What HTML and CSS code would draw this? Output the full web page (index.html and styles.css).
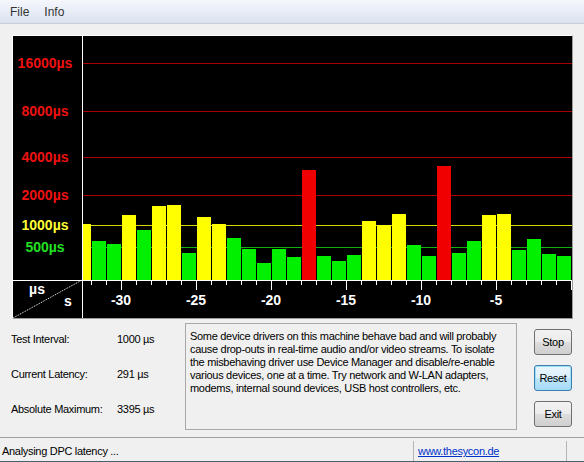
FILE: index.html
```html
<!DOCTYPE html>
<html lang="en">
<head>
  <meta charset="UTF-8">
  <title>DPC Latency Checker</title>
  <link rel="stylesheet" href="styles.css">
</head>
<body>
  <div class="menubar">
    <span>File</span>
    <span>Info</span>
  </div>

  <div class="chart-frame">
    <svg class="chart" width="559" height="282" viewBox="0 0 559 282">
      <!-- threshold lines -->
      <rect class="line-red" x="70" y="27" width="489" height="1"/>
      <rect class="line-red" x="70" y="75" width="489" height="1"/>
      <rect class="line-red" x="70" y="121" width="489" height="1"/>
      <rect class="line-red" x="70" y="159" width="489" height="1"/>
      <rect class="line-yellow" x="70" y="189" width="489" height="1"/>
      <rect class="line-green" x="70" y="211" width="489" height="1"/>

      <text class="lbl lbl-red" x="32" y="32">16000µs</text>
      <text class="lbl lbl-red" x="32" y="80">8000µs</text>
      <text class="lbl lbl-red" x="32" y="126">4000µs</text>
      <text class="lbl lbl-red" x="32" y="164">2000µs</text>
      <text class="lbl lbl-yellow" x="32" y="194">1000µs</text>
      <text class="lbl lbl-green" x="32" y="216">500µs</text>

      <!-- bars, one per second -->
      <rect class="bar-y" x="70" y="188" width="8" height="56"/>
      <rect class="bar-g" x="79" y="205" width="14" height="39"/>
      <rect class="bar-g" x="94" y="208" width="14" height="36"/>
      <rect class="bar-y" x="109" y="179" width="14" height="65"/>
      <rect class="bar-g" x="124" y="194" width="14" height="50"/>
      <rect class="bar-y" x="139" y="170" width="14" height="74"/>
      <rect class="bar-y" x="154" y="169" width="14" height="75"/>
      <rect class="bar-g" x="169" y="217" width="14" height="27"/>
      <rect class="bar-y" x="184" y="181" width="14" height="63"/>
      <rect class="bar-y" x="199" y="188" width="14" height="56"/>
      <rect class="bar-g" x="214" y="202" width="14" height="42"/>
      <rect class="bar-g" x="229" y="213" width="14" height="31"/>
      <rect class="bar-g" x="244" y="227" width="14" height="17"/>
      <rect class="bar-g" x="259" y="213" width="14" height="31"/>
      <rect class="bar-g" x="274" y="221" width="14" height="23"/>
      <rect class="bar-r" x="289" y="134" width="14" height="110"/>
      <rect class="bar-g" x="304" y="220" width="14" height="24"/>
      <rect class="bar-g" x="319" y="225" width="14" height="19"/>
      <rect class="bar-g" x="334" y="219" width="14" height="25"/>
      <rect class="bar-y" x="349" y="185" width="14" height="59"/>
      <rect class="bar-y" x="364" y="189" width="14" height="55"/>
      <rect class="bar-y" x="379" y="178" width="14" height="66"/>
      <rect class="bar-g" x="394" y="209" width="14" height="35"/>
      <rect class="bar-g" x="409" y="220" width="14" height="24"/>
      <rect class="bar-r" x="424" y="130" width="14" height="114"/>
      <rect class="bar-g" x="439" y="217" width="14" height="27"/>
      <rect class="bar-g" x="454" y="205" width="14" height="39"/>
      <rect class="bar-y" x="469" y="179" width="14" height="65"/>
      <rect class="bar-y" x="484" y="178" width="14" height="66"/>
      <rect class="bar-g" x="499" y="214" width="14" height="30"/>
      <rect class="bar-g" x="514" y="203" width="14" height="41"/>
      <rect class="bar-g" x="529" y="218" width="14" height="26"/>
      <rect class="bar-g" x="544" y="220" width="14" height="24"/>

      <!-- axes -->
      <rect class="axis" x="69" y="0" width="1" height="282"/>
      <rect class="axis" x="0" y="244" width="559" height="1"/>
      <line class="diag" x1="0" y1="282" x2="69" y2="244"/>
      <text class="lbl lbl-white" x="24" y="258" text-anchor="start">µs</text>
      <text class="lbl lbl-white" x="55" y="270" text-anchor="start">s</text>

      <path class="ticks" d="M78.5 245v4M93.5 245v4M108.5 245v9M123.5 245v4M138.5 245v4M153.5 245v4M168.5 245v4M183.5 245v9M198.5 245v4M213.5 245v4M228.5 245v4M243.5 245v4M258.5 245v9M273.5 245v4M288.5 245v4M303.5 245v4M318.5 245v4M333.5 245v9M348.5 245v4M363.5 245v4M378.5 245v4M393.5 245v4M408.5 245v9M423.5 245v4M438.5 245v4M453.5 245v4M468.5 245v4M483.5 245v9M498.5 245v4M513.5 245v4M528.5 245v4M543.5 245v4M558.5 245v9"/>

      <text class="lbl lbl-white" x="108" y="269">-30</text>
      <text class="lbl lbl-white" x="183" y="269">-25</text>
      <text class="lbl lbl-white" x="258" y="269">-20</text>
      <text class="lbl lbl-white" x="333" y="269">-15</text>
      <text class="lbl lbl-white" x="408" y="269">-10</text>
      <text class="lbl lbl-white" x="483" y="269">-5</text>
    </svg>
  </div>

  <div class="panel">
    <div class="stats">
      <div class="stat"><span class="stat-label">Test Interval:</span><span>1000 µs</span></div>
      <div class="stat"><span class="stat-label">Current Latency:</span><span>291 µs</span></div>
      <div class="stat"><span class="stat-label">Absolute Maximum:</span><span>3395 µs</span></div>
    </div>

    <div class="message">
      Some device drivers on this machine behave bad and will probably<br>
      cause drop-outs in real-time audio and/or video streams. To isolate<br>
      the misbehaving driver use Device Manager and disable/re-enable<br>
      various devices, one at a time. Try network and W-LAN adapters,<br>
      modems, internal sound devices, USB host controllers, etc.
    </div>

    <div class="buttons">
      <button class="btn">Stop</button>
      <button class="btn btn-focus">Reset</button>
      <button class="btn">Exit</button>
    </div>
  </div>

  <div class="statusbar">
    <div class="status-text">Analysing DPC latency ...</div>
    <div class="status-link"><a href="#">www.thesycon.de</a></div>
    <div class="status-grip"></div>
  </div>
</body>
</html>
```

FILE: styles.css
```css
body {
  margin: 0;
  width: 584px;
  height: 462px;
  overflow: hidden;
  background: #f0f0f0;
  font-family: "Liberation Sans", Arial, sans-serif;
  font-size: 11px;
  letter-spacing: -0.3px;
  color: #000;
}
.menubar {
  height: 23px;
  border-bottom: 1px solid #c8cdd8;
  background: linear-gradient(#f5f7fc, #dbe2f0);
  display: flex;
  align-items: center;
  padding-left: 10px;
  font-size: 12px;
  letter-spacing: 0;
  color: #333;
}
.menubar span {
  margin-right: 15px;
}
.chart-frame {
  margin: 11px 0 0 12px;
  width: 559px;
  height: 282px;
  border: 1px solid;
  border-color: #fff #9c9c9c #9c9c9c #fff;
}
.chart {
  display: block;
  background: #000;
}
.line-red { fill: #a80000; }
.line-yellow { fill: #d8d800; }
.line-green { fill: #10b010; }
.bar-g { fill: #00f000; }
.bar-y { fill: #ffff00; }
.bar-r { fill: #f00000; }
.axis { fill: #fff; }
.diag {
  stroke: #fff;
  stroke-width: 1;
  stroke-dasharray: 1 1;
}
.ticks {
  stroke: #fff;
  stroke-width: 1;
}
.lbl {
  font-family: "Liberation Sans", Arial, sans-serif;
  font-weight: bold;
  font-size: 14px;
  letter-spacing: 0;
  text-anchor: middle;
}
.lbl-red { fill: #ee1111; }
.lbl-yellow { fill: #ffff33; }
.lbl-green { fill: #22e022; }
.lbl-white { fill: #fff; }

.panel {
  display: flex;
  height: 118px;
}
.stats {
  width: 185px;
  box-sizing: border-box;
  padding: 14px 0 0 11px;
}
.stat {
  display: flex;
  height: 35px;
  line-height: 13px;
}
.stat-label {
  width: 106px;
}
.message {
  margin-top: 4px;
  width: 332px;
  height: 107px;
  box-sizing: border-box;
  border: 1px solid #a8a8a8;
  padding: 6px 4px;
  line-height: 13px;
  white-space: nowrap;
}
.buttons {
  margin-left: 17px;
  padding-top: 10px;
  display: flex;
  flex-direction: column;
  gap: 10px;
}
.btn {
  width: 38px;
  height: 26px;
  padding: 0;
  border: 1px solid #707070;
  border-radius: 3px;
  background: linear-gradient(#f2f2f2 0%, #ebebeb 50%, #dddddd 51%, #cfcfcf 100%);
  font-family: "Liberation Sans", Arial, sans-serif;
  font-size: 11px;
  letter-spacing: -0.3px;
  color: #000;
}
.btn-focus {
  border-color: #3c7fb1;
  background: linear-gradient(#eaf6fd 0%, #d9f0fc 50%, #bee6fd 51%, #a7d9f5 100%);
  box-shadow: inset 0 0 0 1px #9fdcf8;
}

.statusbar {
  height: 20px;
  padding-top: 3px;
  border-top: 1px solid #a0a0a0;
  border-bottom: 1px solid #46606c;
  display: flex;
  align-items: stretch;
  line-height: 20px;
}
.status-text {
  width: 411px;
  padding-left: 2px;
  border-right: 1px solid #b4b4b4;
}
.status-link {
  width: 148px;
  padding-left: 4px;
  border-right: 1px solid #b4b4b4;
}
.status-link a {
  color: #0033cc;
}
.status-grip {
  flex: 1;
}
```
